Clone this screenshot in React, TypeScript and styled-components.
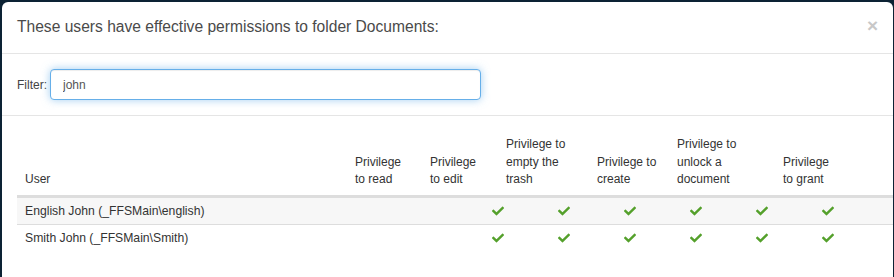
import { FunctionComponent } from 'react'
import styled, { createGlobalStyle } from 'styled-components'
import { FaCheck } from 'react-icons/fa'

const GlobalStyle = createGlobalStyle`
  html, body {
    margin: 0;
    padding: 0;
    background: #0c2234;
    font-family: 'Liberation Sans', Arial, sans-serif;
  }
`

const HEADER_COLUMNS = '330px 75px 76px 91px 80px 106px 79px'
const ROW_COLUMNS = '448px repeat(6, 66px) 16px'

const headers = [
  ['Privilege', 'to read'],
  ['Privilege', 'to edit'],
  ['Privilege to', 'empty the', 'trash'],
  ['Privilege to', 'create'],
  ['Privilege to', 'unlock a', 'document'],
  ['Privilege', 'to grant'],
]

const users = ['English John (_FFSMain\\english)', 'Smith John (_FFSMain\\Smith)']

const App: FunctionComponent = () => (
  <>
    <GlobalStyle />
    <Backdrop>
      <Modal>
        <ModalHeader>
          <Title>These users have effective permissions to folder Documents:</Title>
          <Close>×</Close>
        </ModalHeader>
        <FilterRow>
          <Label>Filter:</Label>
          <FilterInput defaultValue='john' />
        </FilterRow>
        <Body>
          <HeadRow>
            <HeadCell>User</HeadCell>
            {headers.map((lines, i) => (
              <HeadCell key={i}>
                {lines.map((l, j) => (
                  <div key={j}>{l}</div>
                ))}
              </HeadCell>
            ))}
          </HeadRow>
          {users.map((u, i) => (
            <Row key={u} striped={i % 2 === 0}>
              <UserCell>{u}</UserCell>
              {headers.map((_, j) => (
                <CheckCell key={j}>
                  <FaCheck />
                </CheckCell>
              ))}
              <span />
            </Row>
          ))}
        </Body>
      </Modal>
    </Backdrop>
  </>
)

export default App

const Backdrop = styled.div`
  width: 894px;
  height: 277px;
  padding: 2px 1px 0 2px;
  box-sizing: border-box;
  overflow: hidden;
`

const Modal = styled.div`
  background: #fff;
  border-radius: 6px 6px 0 0;
  height: 300px;
`

const ModalHeader = styled.div`
  display: flex;
  align-items: center;
  justify-content: space-between;
  height: 51px;
  padding: 0 15px;
  border-bottom: 1px solid #e5e5e5;
`

const Title = styled.div`
  font-size: 15.6px;
  color: #4a4a4a;
  margin-top: -2px;
`

const Close = styled.div`
  font-size: 19px;
  color: #c8c8c8;
  font-weight: bold;
  line-height: 1;
  margin-top: -4px;
`

const FilterRow = styled.div`
  display: flex;
  align-items: center;
  gap: 3px;
  height: 61px;
  padding: 0 15px;
  border-bottom: 1px solid #e5e5e5;
`

const Label = styled.label`
  font-size: 12px;
  color: #444;
`

const FilterInput = styled.input`
  width: 431px;
  height: 31px;
  box-sizing: border-box;
  border: 1px solid #66afe9;
  border-radius: 4px;
  box-shadow: inset 0 1px 1px rgba(0, 0, 0, 0.075), 0 0 8px rgba(102, 175, 233, 0.6);
  outline: none;
  padding: 0 12px;
  font-family: 'Liberation Sans', Arial, sans-serif;
  font-size: 12px;
  color: #555;
`

const Body = styled.div`
  padding: 20px 0 0 15px;
`

const HeadRow = styled.div`
  display: grid;
  grid-template-columns: ${HEADER_COLUMNS};
  align-items: end;
  border-bottom: 3px solid #ddd;
`

const HeadCell = styled.div`
  padding: 0 8px 6px;
  font-size: 12px;
  line-height: 17.5px;
  color: #333;
`

const Row = styled.div<{ striped: boolean }>`
  display: grid;
  grid-template-columns: ${ROW_COLUMNS};
  align-items: center;
  height: 27px;
  box-sizing: border-box;
  border-bottom: 1px solid #ddd;
  background: ${({ striped }) => (striped ? '#f7f7f7' : '#fff')};
  &:last-child {
    border-bottom: none;
  }
`

const UserCell = styled.div`
  padding: 0 8px;
  font-size: 12.2px;
  color: #333;
`

const CheckCell = styled.div`
  display: flex;
  justify-content: center;
  color: #54a02b;
  font-size: 12px;
`
